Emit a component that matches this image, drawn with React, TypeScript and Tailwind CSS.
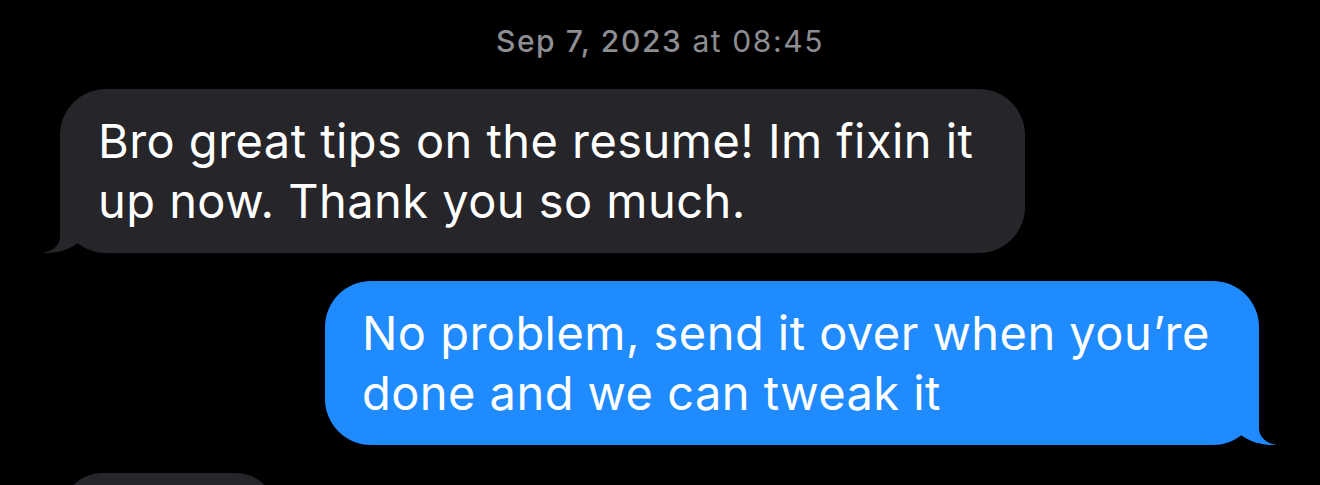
import React from 'react';

const font = { fontFamily: 'Inter, "Noto Sans", sans-serif' };

const GRAY = '#26252a';
const BLUE = '#1f8bff';

// tail drawn at the bottom corner of a bubble
const Tail: React.FC<{ side: 'left' | 'right'; color: string }> = ({ side, color }) => (
  <svg
    width="40"
    height="50"
    viewBox="0 0 40 50"
    className={`absolute bottom-0 ${side === 'left' ? 'left-[-20px]' : 'right-[-20px] -scale-x-100'}`}
  >
    <path d="M20,0 L20,33 C20,42 13,48 3,50 C16,50.5 29,47 38,40 L40,0 Z" fill={color} />
  </svg>
);

const Bubble: React.FC<{
  lines: string[];
  side: 'left' | 'right';
  className: string;
}> = ({ lines, side, className }) => {
  const color = side === 'left' ? GRAY : BLUE;
  return (
    <div
      className={`relative rounded-[46px] py-[22px] text-white text-[47px] leading-[60px] tracking-[0.45px] ${className}`}
      style={{ backgroundColor: color }}
    >
      {lines.map((l, i) => (
        <div key={i} className="whitespace-nowrap">
          {l}
        </div>
      ))}
      <Tail side={side} color={color} />
    </div>
  );
};

export default function App() {
  return (
    <div className="w-[1320px] h-[485px] overflow-hidden bg-black" style={font}>
      <div className="pt-[21px] h-[89px] text-center text-[30px] leading-[40px] tracking-[1.6px] text-[#8d8d92]">
        <span className="font-medium">Sep 7, 2023</span> at 08:45
      </div>

      <div className="flex flex-col gap-[28px]">
        <Bubble
          side="left"
          className="ml-[60px] w-[965px] pl-[38px]"
          lines={['Bro great tips on the resume! Im fixin it', 'up now. Thank you so much.']}
        />
        <Bubble
          side="right"
          className="ml-[325px] w-[934px] pl-[37px]"
          lines={['No problem, send it over when you\u2019re', 'done and we can tweak it']}
        />
        <div className="ml-[62px] w-[214px] h-[80px] rounded-[46px]" style={{ backgroundColor: GRAY }} />
      </div>
    </div>
  );
}
